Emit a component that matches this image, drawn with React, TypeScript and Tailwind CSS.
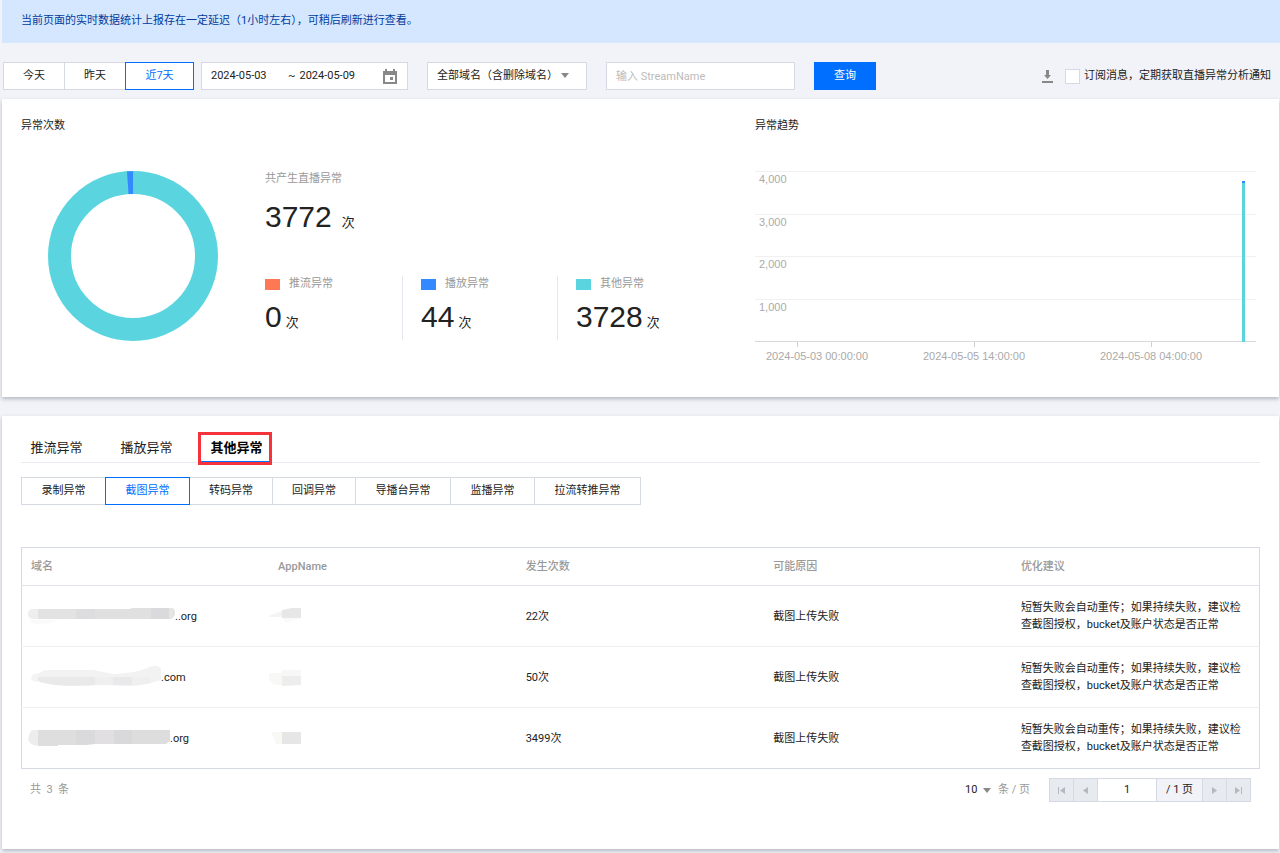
import { useState } from "react";

const ranges = [
  { label: "今天", width: "w-[62px]" },
  { label: "昨天", width: "w-[62px]" },
  { label: "近7天", width: "w-[69px]" },
];

const totals = [
  { label: "推流异常", value: 0, color: "bg-[#ff7856]" },
  { label: "播放异常", value: 44, color: "bg-[#3389ff]" },
  { label: "其他异常", value: 3728, color: "bg-[#5ad5e0]" },
];

const tabs = ["推流异常", "播放异常", "其他异常"];

const subTabs = [
  { label: "录制异常", width: "w-[85px]" },
  { label: "截图异常", width: "w-[85px]" },
  { label: "转码异常", width: "w-[84px]" },
  { label: "回调异常", width: "w-[84px]" },
  { label: "导播台异常", width: "w-[96px]" },
  { label: "监播异常", width: "w-[85px]" },
  { label: "拉流转推异常", width: "w-[107px]" },
];

const columns = ["域名", "AppName", "发生次数", "可能原因", "优化建议"];

const advice = "短暂失败会自动重传；如果持续失败，建议检查截图授权，bucket及账户状态是否正常";

const rows = [
  { id: 1, suffix: "..org", count: "22次" },
  { id: 2, suffix: ".com", count: "50次" },
  { id: 3, suffix: ".org", count: "3499次" },
];

function Caret() {
  return (
    <svg width="8" height="5" viewBox="0 0 8 5" className="pointer-events-none shrink-0 fill-[#888]">
      <path d="M0 0h8L4 5z" />
    </svg>
  );
}

function CalendarIcon() {
  return (
    <svg width="14" height="15" viewBox="0 0 14 15" className="shrink-0 fill-[#888]">
      <path d="M0 2h2V0h2v2h6V0h2v2h2v13H0zM2 6v7h10V6z" fillRule="evenodd" />
      <rect x="7" y="8" width="3" height="3" />
    </svg>
  );
}

function DownloadIcon() {
  return (
    <svg width="11" height="13" viewBox="0 0 11 13" className="fill-[#888]">
      <path d="M4 0h3v5h2L5.500 9 2 5h2z" />
      <rect y="11" width="11" height="2" />
    </svg>
  );
}

// masked domain names
function DomainMask({ id }: { id: number }) {
  if (id === 1) {
    return (
      <svg width="147" height="18" viewBox="0 0 147 18" className="shrink-0">
        <path d="M1 13h29q-6 4-20 4-8 0-9-4z" fill="#fafafa" />
        <path d="M10 2v10H4q-4-1-4-5t4-5z" fill="#eeeeee" />
        <path d="M10 2h38v10H10z" fill="#e2e2e2" />
        <path d="M48 2h19v10H48z" fill="#dddde0" />
        <path d="M67 2h35l2-1h19v11H67z" fill="#e0e0e0" />
        <path d="M123 1h18v11h-18z" fill="#dad9dc" />
        <path d="M141 1h4q3 2 2 7l-3 4h-3z" fill="#e5e5e3" />
      </svg>
    );
  }
  if (id === 2) {
    return (
      <svg width="133" height="22" viewBox="0 0 133 22" className="shrink-0">
        <path d="M10 7v9Q3 16 3 12t7-5z" fill="#f3f5f5" />
        <path d="M10 8q5-4 9-4h46q10 2 20 4 25-1 36-7 10-3 12 2v11q-20 7-38 6-12-1-20-1-38 2-55-2-9-2-10-3z" fill="#f2f2f2" />
        <path d="M10 11h57v8q-32 2-47-1-9-2-10-3z" fill="#e9e9e9" />
        <path d="M67 11h18v8H67zM104 11h18v6q-9 2-18 2z" fill="#efeff0" />
        <path d="M85 11h19v8H85z" fill="#e9e8eb" />
      </svg>
    );
  }
  return (
    <svg width="142" height="18" viewBox="0 0 142 18" className="shrink-0">
      <path d="M10 1v16Q1 16 0 10 2 1 5 1z" fill="#ededed" />
      <path d="M10 1h38v15H30v1H10z" fill="#dedede" />
      <path d="M48 1h19v14l-9 1H48z" fill="#dad9dc" />
      <path d="M67 1h19v14H67z" fill="#e1dfe2" />
      <path d="M86 1h18v14H86z" fill="#d9d9db" />
      <path d="M104 1h38v11l-4 3h-34z" fill="#dddddd" />
    </svg>
  );
}

function AppMask({ id }: { id: number }) {
  return (
    <svg width="32" height="20" viewBox="1 0 32 20">
      {id === 1 && (
        <>
          <path d="M0 10l14-5v6H0z" fill="#f4f4f3" />
          <path d="M14 4l10-2h9v10H14z" fill="#e6e7e6" />
          <path d="M14 12h18l-14 5z" fill="#fbfaf8" />
        </>
      )}
      {id === 2 && (
        <>
          <path d="M0 6h14v12H6Q0 14 0 6z" fill="#f8f8f7" />
          <path d="M14 3h19v6H14z" fill="#f7f7f7" />
          <path d="M14 9h19v9l-19 1z" fill="#ededed" />
        </>
      )}
      {id === 3 && (
        <>
          <path d="M3 4h11v12H8z" fill="#f8f8f5" />
          <path d="M14 4h19v12H14z" fill="#e6e6e6" />
        </>
      )}
    </svg>
  );
}

function Donut() {
  return (
    <svg width="170" height="170" viewBox="0 0 170 170" className="ml-[27px] shrink-0">
      <circle cx="85" cy="85" r="73.500" fill="none" stroke="#5ad5e0" strokeWidth="23" />
      <path d="M79 0.200H85V23H80.500z" fill="#3389ff" />
    </svg>
  );
}

function TrendChart() {
  const yTicks = [
    { label: "4,000", y: 0 },
    { label: "3,000", y: 43 },
    { label: "2,000", y: 85 },
    { label: "1,000", y: 128 },
  ];
  const xTicks = [
    { label: "2024-05-03 00:00:00", tick: 43, text: 62 },
    { label: "2024-05-05 14:00:00", tick: 220, text: 219 },
    { label: "2024-05-08 04:00:00", tick: 397, text: 396 },
  ];

  return (
    <svg viewBox="0 0 501 194" className="h-auto w-full font-['Liberation_Sans',sans-serif] text-[11px]">
      {yTicks.map((t) => (
        <g key={t.label}>
          <rect y={t.y} width="501" height="1" fill="#f0f0f0" />
          <text x="4" y={t.y + 12} fill="#aaaaaa">{t.label}</text>
        </g>
      ))}
      <rect y="170" width="501" height="1" fill="#d9d9d9" />
      {xTicks.map((t) => (
        <g key={t.label}>
          <rect x={t.tick - 1} y="171" width="1" height="5" fill="#d0d0d0" />
          <text x={t.text} y="189" textAnchor="middle" fill="#aaaaaa">{t.label}</text>
        </g>
      ))}
      <rect x="487" y="12" width="3" height="159" fill="#5ad5e0" />
      <rect x="487" y="10" width="3" height="2" fill="#3389ff" />
    </svg>
  );
}

function Toolbar() {
  const [range, setRange] = useState("近7天");

  return (
    <div className="flex h-7 items-center pr-[9px] pl-px">
      <div className="flex h-full">
        {ranges.map((r) => (
          <button
            key={r.label}
            onClick={() => setRange(r.label)}
            className={`-ml-px border first:ml-0 ${r.width} ${
              range === r.label ? "z-10 border-[#006eff] bg-white text-[#006eff]" : "border-[#d5d9e3] bg-white"
            }`}
          >
            {r.label}
          </button>
        ))}
      </div>

      <div className="ml-[7px] flex h-full w-[207px] items-center border border-[#d5d9e3] bg-white pr-[10px] pl-[9px]">
        <input aria-label="开始日期" defaultValue="2024-05-03" className="w-[77px] outline-none" />
        <span className="mr-1">~</span>
        <input aria-label="结束日期" defaultValue="2024-05-09" className="w-0 flex-1 outline-none" />
        <CalendarIcon />
      </div>

      <div className="relative ml-[19px] h-full w-40">
        <select aria-label="域名" className="h-full w-full appearance-none border border-[#d5d9e3] bg-white pl-[9px]">
          <option>全部域名（含删除域名）</option>
        </select>
        <span className="pointer-events-none absolute top-[11px] left-[134px]">
          <Caret />
        </span>
      </div>

      <input
        aria-label="StreamName"
        placeholder="输入 StreamName"
        className="ml-[19px] h-full w-[189px] border border-[#d5d9e3] bg-white px-[9px] outline-none placeholder:text-[#bbbbbb]"
      />
      <button className="ml-[19px] h-full w-[62px] bg-[#006eff] text-white">查询</button>

      <button aria-label="下载" className="ml-auto">
        <DownloadIcon />
      </button>
      <label className="ml-3 flex items-center gap-1">
        <input type="checkbox" className="h-[15px] w-[15px] appearance-none border border-[#d5d9e3] bg-white" />
        订阅消息，定期获取直播异常分析通知
      </label>
    </div>
  );
}

function Overview() {
  return (
    <section className="mr-px grid grid-cols-[734fr_501fr] bg-white pt-[18px] pr-[23px] pb-8 pl-[19px] shadow-[0_2px_4px_rgba(54,58,80,0.32)]">
      <div>
        <h3 className="leading-[18px]">异常次数</h3>
        <div className="mt-9 flex">
          <Donut />
          <div className="ml-[47px]">
            <p className="leading-4 text-[#999]">共产生直播异常</p>
            <p className="mt-3 leading-9">
              <span className="font-['Liberation_Sans',sans-serif] text-[30px]">3772</span>
              <span className="ml-[10px] text-[13px]">次</span>
            </p>
            <div className="mt-[34px] flex">
              {totals.map((t) => (
                <div
                  key={t.label}
                  className="h-16 w-[155px] border-l border-[#e5e8ed] pl-[18px] first:w-[137px] first:border-l-0 first:pl-0"
                >
                  <p className="flex h-4 items-center text-[#999]">
                    <span className={`mr-[9px] h-[11px] w-[15px] ${t.color}`} />
                    {t.label}
                  </p>
                  <p className="mt-[7px] leading-9">
                    <span className="font-['Liberation_Sans',sans-serif] text-[30px]">{t.value}</span>
                    <span className="ml-1 text-[13px]">次</span>
                  </p>
                </div>
              ))}
            </div>
          </div>
        </div>
      </div>
      <div>
        <h3 className="leading-[18px]">异常趋势</h3>
        <div className="mt-9">
          <TrendChart />
        </div>
      </div>
    </section>
  );
}

function Pager() {
  const cell = "flex items-center justify-center border-l border-[#d5d9e3]";

  return (
    <div className="flex h-6 border border-l-0 border-[#d5d9e3]">
      <button aria-label="首页" className={`${cell} w-6 bg-[#e7eaef]`}>
        <svg width="7" height="7" viewBox="0 0 7 7" fill="#b4b8c0"><path d="M0 0h1v7H0zM7 0v7L2 3.500z" /></svg>
      </button>
      <button aria-label="上一页" className={`${cell} w-6 bg-[#e7eaef]`}>
        <svg width="5" height="7" viewBox="0 0 5 7" fill="#b4b8c0"><path d="M5 0v7L0 3.500z" /></svg>
      </button>
      <input aria-label="页码" defaultValue="1" className="w-[59px] border-l border-[#d5d9e3] bg-white text-center outline-none" />
      <span className={`${cell} w-[46px] bg-[#f2f3f8]`}>/ 1 页</span>
      <button aria-label="下一页" className={`${cell} w-6 bg-[#e7eaef]`}>
        <svg width="5" height="7" viewBox="0 0 5 7" fill="#b4b8c0"><path d="M0 0v7l5-3.500z" /></svg>
      </button>
      <button aria-label="末页" className={`${cell} w-6 bg-[#e7eaef]`}>
        <svg width="7" height="7" viewBox="0 0 7 7" fill="#b4b8c0"><path d="M6 0h1v7H6zM0 0v7l5-3.500z" /></svg>
      </button>
    </div>
  );
}

function Details() {
  const [tab, setTab] = useState("其他异常");
  const [sub, setSub] = useState("截图异常");

  return (
    <section className="mt-[19px] mr-px bg-white px-[19px] pt-4 pb-[47px] shadow-[0_2px_4px_rgba(54,58,80,0.32)]">
      <div className="flex h-[31px] gap-[19px] border-b border-[#e8eaf0] text-[13px]">
        {tabs.map((t) => (
          <button
            key={t}
            onClick={() => setTab(t)}
            className={`relative h-[31px] w-[71px] pt-px ${
              tab === t ? "font-bold text-black shadow-[inset_0_-2px_0_#006eff]" : ""
            }`}
          >
            {t}
            {tab === t && <span className="absolute top-0 right-0 -bottom-[2px] -left-[3px] border-3 border-[#f5333a]" />}
          </button>
        ))}
      </div>

      <div className="mt-[14px] flex h-7">
        {subTabs.map((s) => (
          <button
            key={s.label}
            onClick={() => setSub(s.label)}
            className={`-ml-px border first:ml-0 ${s.width} ${
              sub === s.label ? "z-10 border-[#006eff] text-[#006eff]" : "border-[#d5d9e3]"
            }`}
          >
            {s.label}
          </button>
        ))}
      </div>

      <table className="mt-[42px] w-full table-fixed border-collapse border border-[#d5d9e3] text-left leading-[17px]">
        <thead>
          <tr className="h-[38px] border-b border-[#dfe2e9] text-[#999]">
            {columns.map((c) => (
              <th key={c} className="px-[9px] font-medium">{c}</th>
            ))}
          </tr>
        </thead>
        <tbody>
          {rows.map((r) => (
            <tr key={r.id} className="h-[61px] border-b border-[#eceef2] last:border-[#d5d9e3]">
              <td className="pl-[6px]">
                <div className="flex items-center">
                  <DomainMask id={r.id} />
                  {r.suffix}
                </div>
              </td>
              <td>
                <AppMask id={r.id} />
              </td>
              <td className="px-[9px]">{r.count}</td>
              <td className="px-[9px]">截图上传失败</td>
              <td className="px-[9px]">{advice}</td>
            </tr>
          ))}
        </tbody>
      </table>

      <div className="mt-[9px] flex items-center pr-[9px] pl-[9px]">
        <span className="text-[#999]">共&nbsp; 3&nbsp; 条</span>
        <div className="relative ml-auto mr-[7px] flex items-center">
          <select aria-label="每页条数" className="w-[26px] appearance-none">
            <option>10</option>
          </select>
          <span className="pointer-events-none absolute right-0">
            <Caret />
          </span>
        </div>
        <span className="mr-[19px] text-[#999]">条 / 页</span>
        <Pager />
      </div>
    </section>
  );
}

export default function App() {
  return (
    <div className="min-h-screen bg-[#f2f3f8] pb-1 pl-[2px] font-[Roboto,'Noto_Sans_CJK_SC',sans-serif] text-[11px] text-[#222]">
      <div className="mb-[19px] flex h-[43px] items-center bg-[#d5e7ff] px-[19px] text-[#003b9c]">
        当前页面的实时数据统计上报存在一定延迟（1小时左右），可稍后刷新进行查看。
      </div>
      <Toolbar />
      <div className="mt-[9px]">
        <Overview />
        <Details />
      </div>
    </div>
  );
}
